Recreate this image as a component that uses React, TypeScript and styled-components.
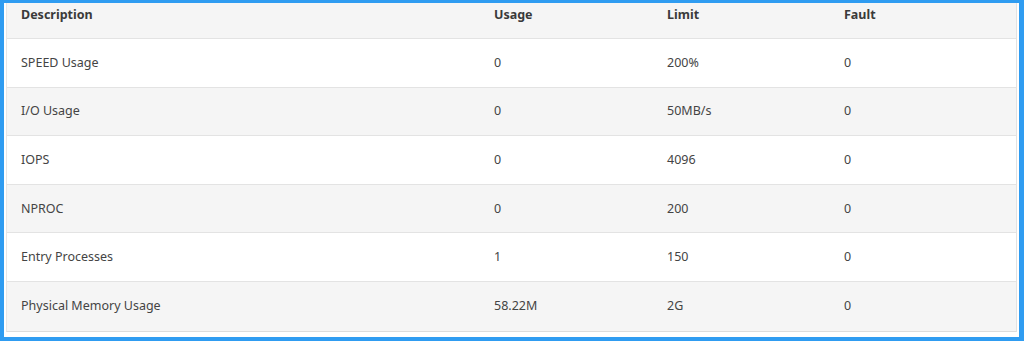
import styled, { createGlobalStyle } from "styled-components";

// estilos globais
const GlobalStyle = createGlobalStyle`
  * {
    margin: 0;
    padding: 0;
    box-sizing: border-box;
  }
  body {
    background: #ffffff;
    font-family: "Noto Sans", "Open Sans", sans-serif;
  }
`;

// moldura azul em volta do print
const Frame = styled.div`
  width: 1024px;
  height: 341px;
  border-style: solid;
  border-color: #2f9cf1;
  border-width: 3px 5px 4px 4px;
  background: #ffffff;
  padding: 0 2px 6px 2px;
  overflow: hidden;
`;

const Table = styled.div`
  display: flex;
  flex-direction: column;
  border-left: 1px solid #e6e6e6;
  border-right: 1px solid #e2e2e2;
  border-bottom: 1px solid #dcdcdc;
`;

const Row = styled.div<{ $head?: boolean; $shade?: boolean }>`
  display: grid;
  grid-template-columns: 473px 173px 177px 1fr;
  align-items: ${(p) => (p.$head ? "start" : "center")};
  height: ${(p) => (p.$head ? "36px" : "48.6px")};
  padding-left: 14px;
  padding-top: ${(p) => (p.$head ? "1px" : "0")};
  background: ${(p) => (p.$head || p.$shade ? "#f5f5f5" : "#ffffff")};
  border-bottom: 1px solid #e3e3e3;
  &:last-child {
    border-bottom: none;
  }
`;

const Cell = styled.span<{ $head?: boolean }>`
  font-size: 12.5px;
  line-height: 22px;
  font-weight: ${(p) => (p.$head ? 700 : 400)};
  color: ${(p) => (p.$head ? "#3a3a3a" : "#444444")};
  white-space: nowrap;
`;

const cols = ["Description", "Usage", "Limit", "Fault"];

const rows = [
  ["SPEED Usage", "0", "200%", "0"],
  ["I/O Usage", "0", "50MB/s", "0"],
  ["IOPS", "0", "4096", "0"],
  ["NPROC", "0", "200", "0"],
  ["Entry Processes", "1", "150", "0"],
  ["Physical Memory Usage", "58.22M", "2G", "0"],
];

const App = () => {
  return (
    <>
      <GlobalStyle />
      <Frame>
        <Table>
          <Row $head>
            {cols.map((c) => (
              <Cell $head key={c}>
                {c}
              </Cell>
            ))}
          </Row>
          {rows.map((r, i) => (
            <Row key={r[0]} $shade={i % 2 === 1}>
              {r.map((v, j) => (
                <Cell key={j}>{v}</Cell>
              ))}
            </Row>
          ))}
        </Table>
      </Frame>
    </>
  );
};

export default App;
